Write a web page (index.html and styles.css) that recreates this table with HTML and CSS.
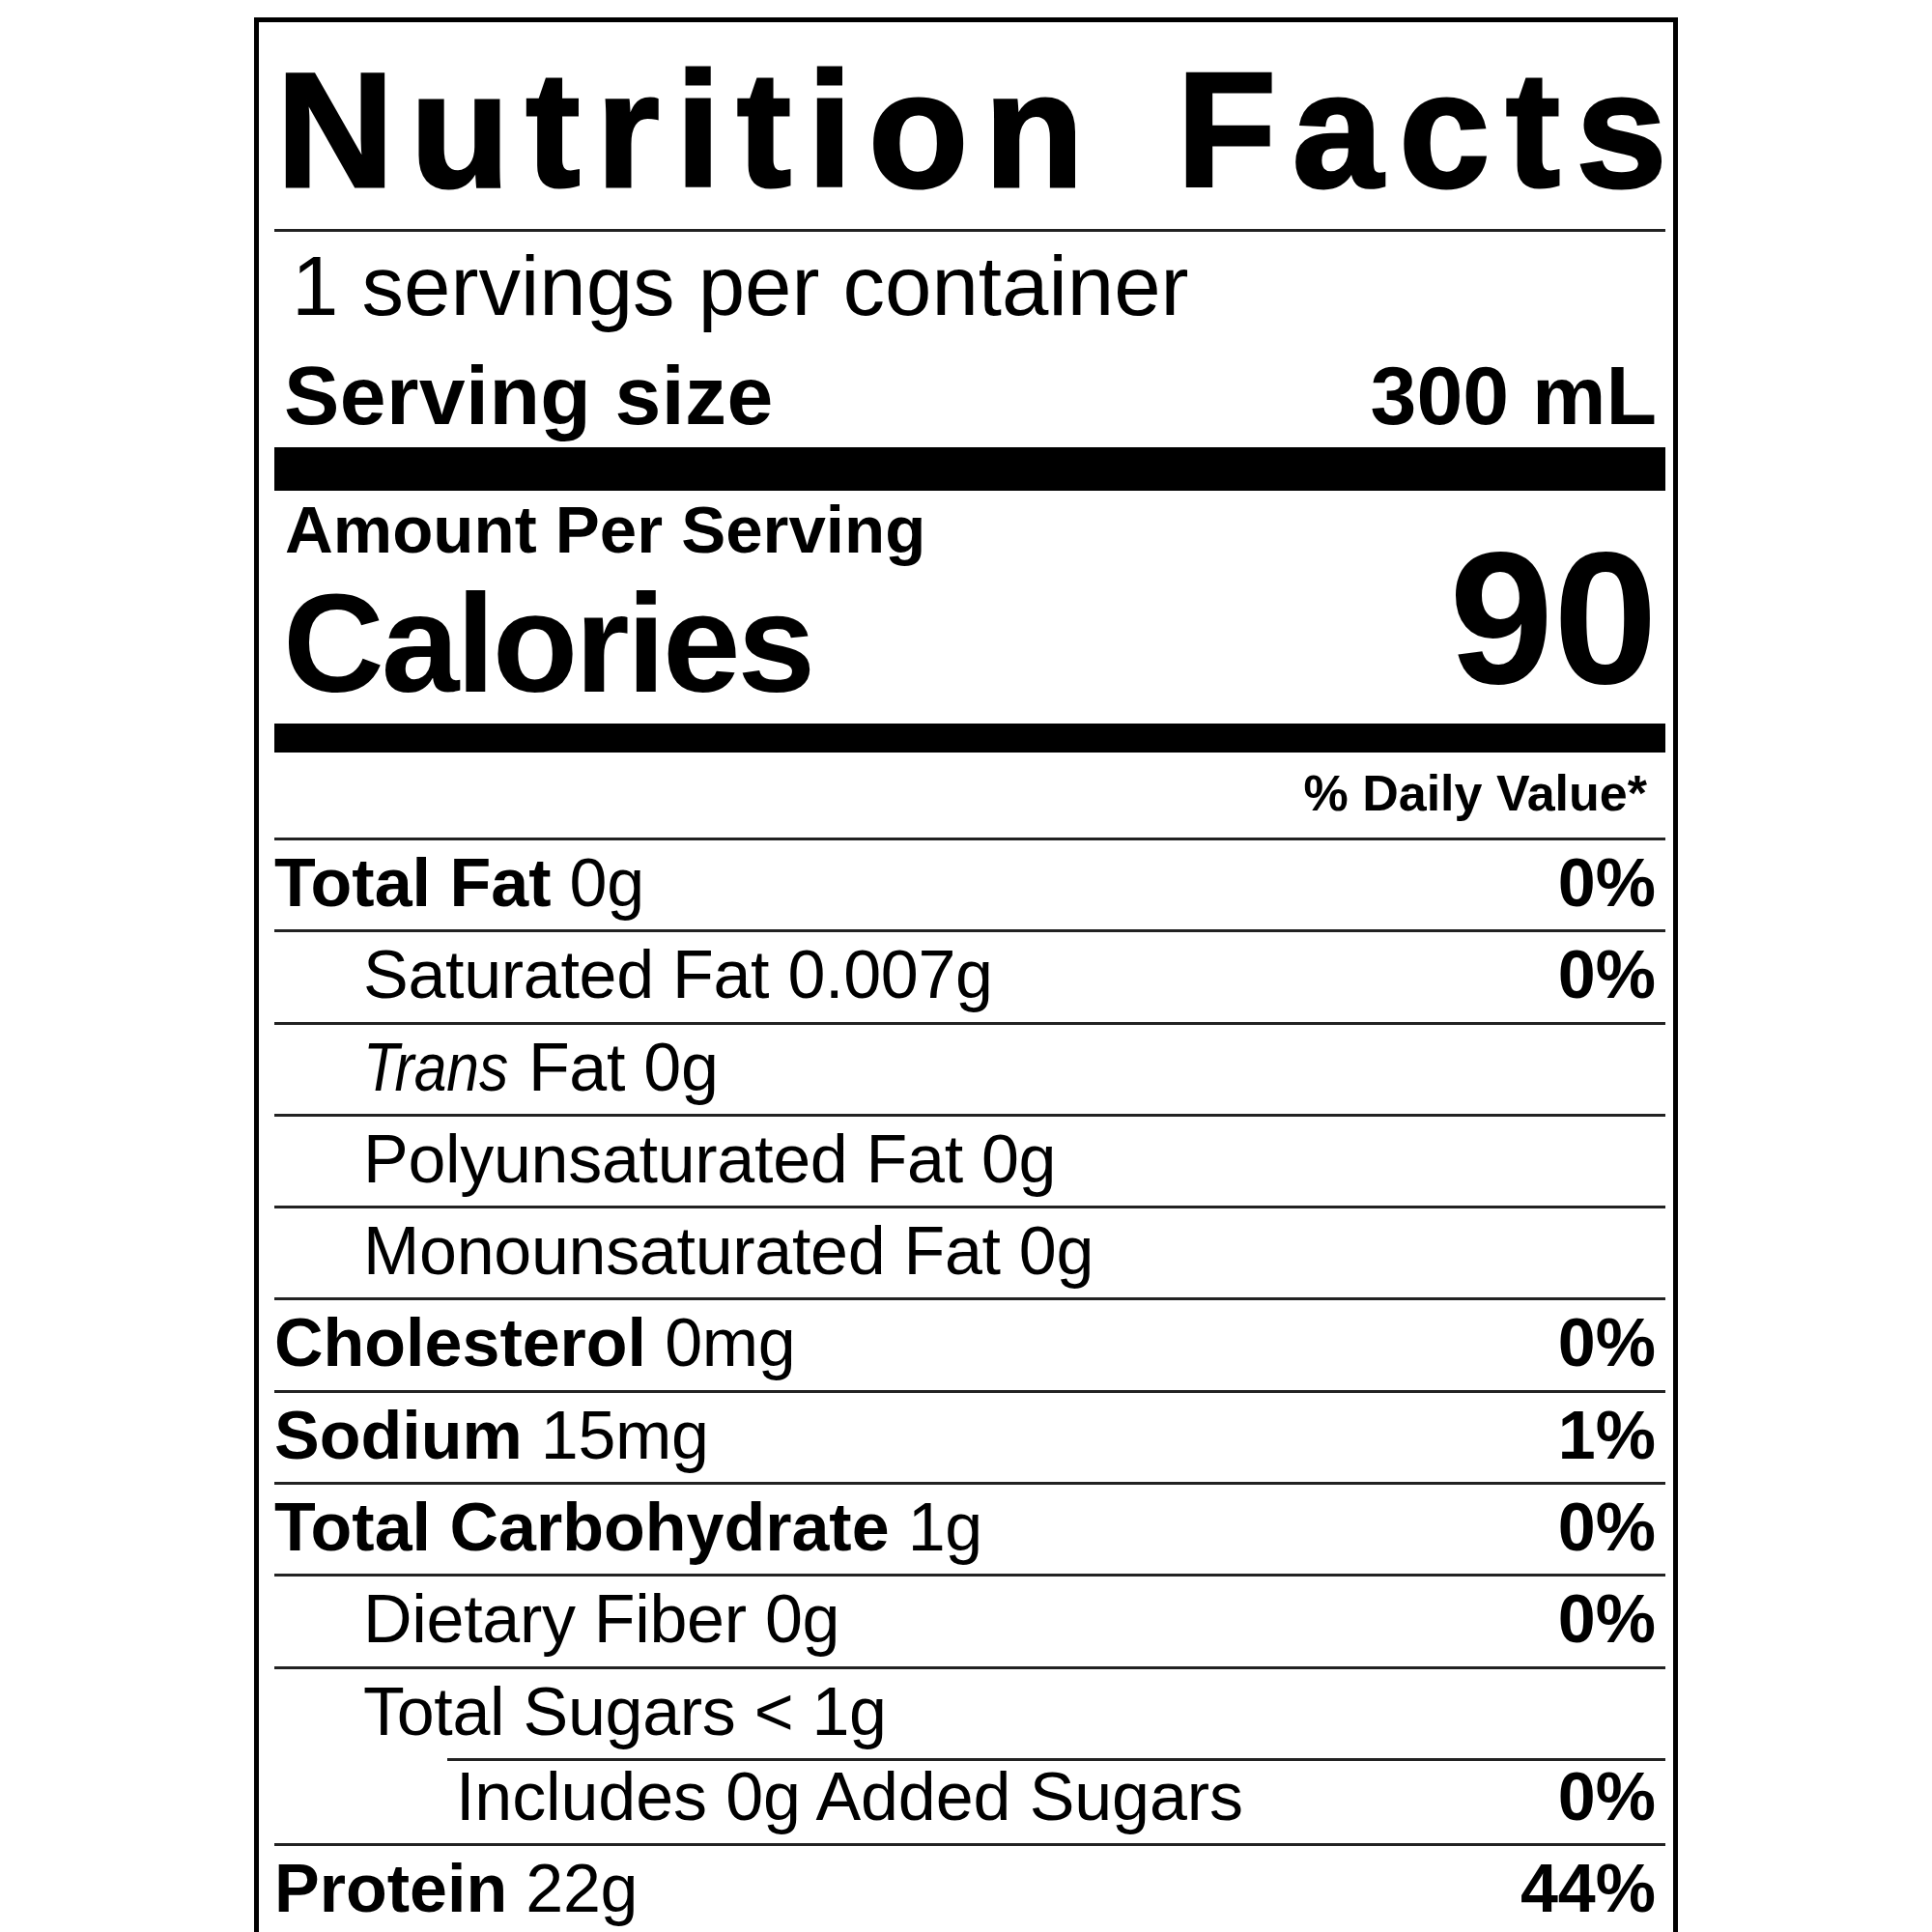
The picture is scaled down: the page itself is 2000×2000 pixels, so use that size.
FILE: index.html
```html
<!DOCTYPE html>
<html>
<head>
<meta charset="utf-8">
<title>Nutrition Facts</title>
<link rel="stylesheet" href="styles.css">
</head>
<body>
<div class="label">
  <h1 class="title">Nutrition Facts</h1>
  <div class="servings">1 servings per container</div>
  <div class="serving-size"><span>Serving size</span><span>300 mL</span></div>
  <div class="bar bar-thick"></div>
  <div class="cal-block">
    <div class="cal-left">
      <div class="amount">Amount Per Serving</div>
      <div class="calories">Calories</div>
    </div>
    <div class="cal-num">90</div>
  </div>
  <div class="bar bar-medium"></div>
  <div class="dv-head">% Daily Value*</div>
  <div class="row"><span><b>Total Fat</b> 0g</span><b>0%</b></div>
  <div class="row ind"><span>Saturated Fat 0.007g</span><b>0%</b></div>
  <div class="row ind"><span><i>Trans</i> Fat 0g</span></div>
  <div class="row ind"><span>Polyunsaturated Fat 0g</span></div>
  <div class="row ind"><span>Monounsaturated Fat 0g</span></div>
  <div class="row"><span><b>Cholesterol</b> 0mg</span><b>0%</b></div>
  <div class="row"><span><b>Sodium</b> 15mg</span><b>1%</b></div>
  <div class="row"><span><b>Total Carbohydrate</b> 1g</span><b>0%</b></div>
  <div class="row ind"><span>Dietary Fiber 0g</span><b>0%</b></div>
  <div class="row ind"><span>Total Sugars &lt; 1g</span></div>
  <div class="row added"><span>Includes 0g Added Sugars</span><b>0%</b></div>
  <div class="row"><span><b>Protein</b> 22g</span><b>44%</b></div>
</div>
</body>
</html>
```

FILE: styles.css
```css
html, body {
  margin: 0;
  padding: 0;
  background: #fff;
}

.label {
  width: 1474px;
  box-sizing: border-box;
  margin: 18px auto 0;
  border: 5px solid #000;
  border-bottom: none;
  padding: 0 8px 40px 16px;
  font-family: "Liberation Sans", Arial, Helvetica, sans-serif;
  color: #000;
}

.title {
  margin: 0;
  padding: 27px 0 18px 2px;
  font-size: 169px;
  line-height: 169px;
  font-weight: 700;
  letter-spacing: 16.5px;
  word-spacing: 16px;
  -webkit-text-stroke: 3px #000;
  white-space: nowrap;
  border-bottom: 3px solid #222;
}

.servings {
  margin-top: 12.4px;
  padding-left: 18px;
  font-size: 87px;
  line-height: 87px;
  white-space: nowrap;
}

.serving-size {
  display: flex;
  justify-content: space-between;
  margin-top: 26.8px;
  padding: 0 9px 0 10px;
  font-size: 86px;
  line-height: 86px;
  font-weight: 700;
}

.serving-size span:first-child {
  letter-spacing: 0.4px;
}

.bar {
  background: #000;
}

.bar-thick {
  height: 45px;
  margin-top: 10.8px;
}

.bar-medium {
  height: 30px;
  margin-top: 9.7px;
}

.cal-block {
  display: flex;
  justify-content: space-between;
  align-items: flex-start;
}

.cal-left {
  display: flex;
  flex-direction: column;
}

.amount {
  margin-top: 5.6px;
  padding-left: 11px;
  font-size: 69px;
  line-height: 69px;
  font-weight: 700;
}

.calories {
  margin-top: 11.7px;
  padding-left: 9px;
  font-size: 145px;
  line-height: 145px;
  font-weight: 700;
  letter-spacing: -3px;
}

.cal-num {
  margin-top: 34.8px;
  padding-right: 8px;
  font-size: 194px;
  line-height: 194px;
  font-weight: 700;
}

.dv-head {
  padding: 16px 19px 20px 0;
  text-align: right;
  font-size: 52px;
  line-height: 52px;
  font-weight: 700;
}

.row {
  display: flex;
  justify-content: space-between;
  box-sizing: border-box;
  height: 95.3px;
  border-top: 3px solid #222;
  padding-right: 10px;
  font-size: 70px;
  line-height: 88px;
  white-space: nowrap;
}

.row > span {
  letter-spacing: -0.3px;
}

.row b {
  font-weight: 700;
  letter-spacing: 0;
}

.row i {
  display: inline-block;
  font-style: italic;
  letter-spacing: 0;
  transform: scaleX(0.865);
  transform-origin: left center;
  margin-right: -22px;
}

.row.ind > span:first-child {
  padding-left: 92px;
}

.row.added {
  height: 88px;
  margin-left: 179px;
  line-height: 75.5px;
}

.row.added > span:first-child {
  padding-left: 9px;
  letter-spacing: -0.1px;
}
```
